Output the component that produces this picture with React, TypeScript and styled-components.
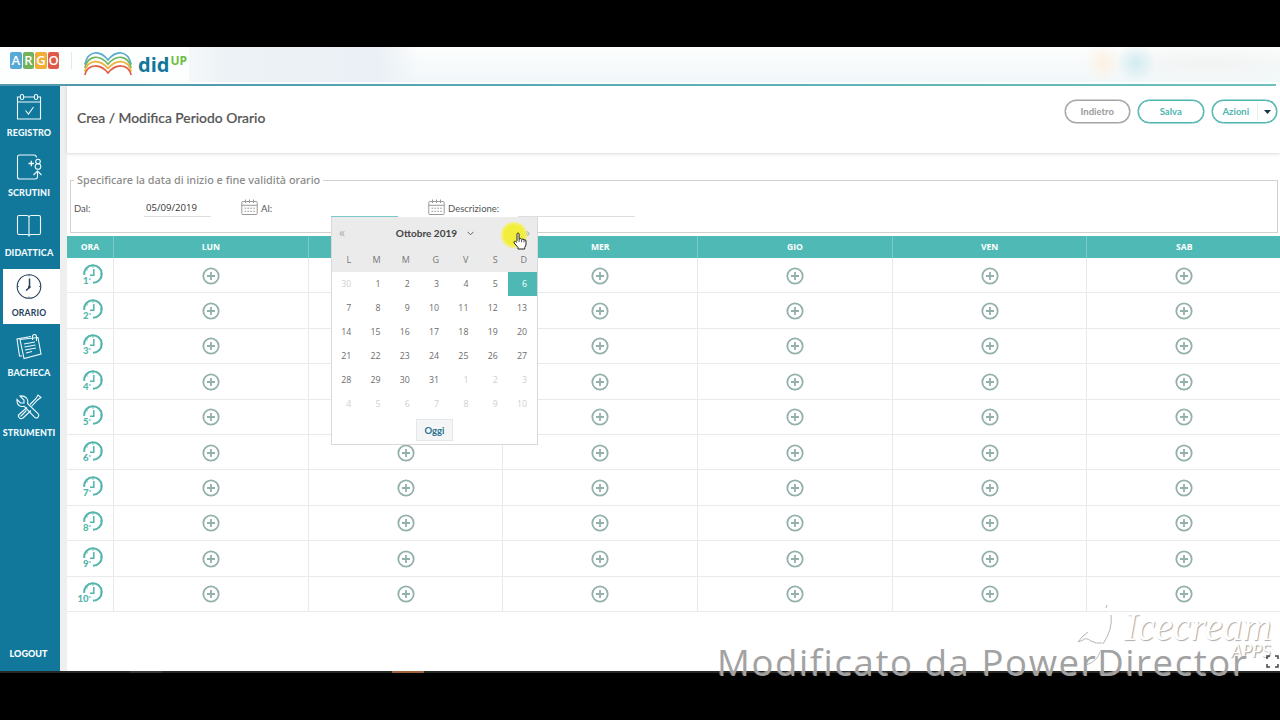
import React from "react";
import styled, { createGlobalStyle } from "styled-components";

const days = ["LUN", "MAR", "MER", "GIO", "VEN", "SAB"];
const hours = [1, 2, 3, 4, 5, 6, 7, 8, 9, 10];
const weekDays = ["L", "M", "M", "G", "V", "S", "D"];

// 30 settembre -> 10 novembre
const calendar = [
  30,
  ...Array.from({ length: 31 }, (_, i) => i + 1),
  ...Array.from({ length: 10 }, (_, i) => i + 1),
];

const IconRegistro: React.FC = () => (
  <Icon viewBox="0 0 26 28">
    <path d="M4 4H1.5v22h23V4H22M8 4h10M1.5 9h23" />
    <rect x="4.4" y="1.5" width="3.2" height="5" rx="1.5" />
    <rect x="18.4" y="1.5" width="3.2" height="5" rx="1.5" />
    <path d="M9.5 17.5l3 3.5 5-7" />
  </Icon>
);

const IconScrutini: React.FC = () => (
  <Icon viewBox="0 0 26 28">
    <path d="M20.500 4.500q-.3-2.500-2.500-2.500H3.500q-2 0-2 2v20q0 2 2 2H19q2.500 0 2.500-2.500V18" />
    <path d="M12.500 10.500h5.500M15.300 7.800v5.500" strokeWidth="1.300" />
    <circle cx="22" cy="8.500" r="2.300" />
    <circle cx="22" cy="13.500" r="2.800" />
    <path d="M17.500 22l4-4 4 4" />
  </Icon>
);

const IconDidattica: React.FC = () => (
  <Icon viewBox="0 0 26 28">
    <path d="M13 4q-.5-1.500-2-1.500H3q-1.500 0-1.500 1.500v16q0 1.500 1.500 1.500h8q2 0 2 2q0-2 2-2h8q1.500 0 1.500-1.500V4q0-1.500-1.500-1.500h-8q-1.500 0-2 1.500v19" />
  </Icon>
);

const IconOrario: React.FC = () => (
  <Icon viewBox="0 0 26 28">
    <circle cx="13" cy="13.500" r="11.800" />
    <path d="M13.500 5.500v9l-3.500 3" strokeWidth="1.500" />
    <circle cx="13.300" cy="14" r=".8" />
    <path d="M13 2v1.500M13 23.500V25M1.500 13.500H3M23 13.500h1.500" strokeWidth=".7" />
  </Icon>
);

const IconBacheca: React.FC = () => (
  <Icon viewBox="0 0 26 28">
    <path d="M6 23H3.500L1 6l14-2.500" />
    <path d="M4 6.500L22 4.500 25 21 8 25.500z" />
    <path d="M8 11l11-2M8.500 14l11-2M9 17l11-2M10 20l6-1.500" />
    <path d="M16.500 7V4q0-2.500 2-2.500t2 2.500v4" />
  </Icon>
);

const IconStrumenti: React.FC = () => (
  <Icon viewBox="0 0 26 28">
    <path d="M4 3l4 4v3H4.500L1 6.500q-.5 4 2 6 2 1.500 5 .7l10.500 11q1.500 1.500 3.500 0 1.500-2 0-3.500L11.500 10.500q1-3-1-5.500-2.500-2.500-6.500-2z" />
    <path d="M14 11.500l6-6 2-3.500 3 2.500-3.500 2.500-6 6.500M11 14.500L3.500 21q-2 1.500-.5 3.500t4 .5l8-7.500" />
    <path d="M4.500 23.500l6-6" />
  </Icon>
);

const menu = [
  { label: "REGISTRO", icon: <IconRegistro /> },
  { label: "SCRUTINI", icon: <IconScrutini /> },
  { label: "DIDATTICA", icon: <IconDidattica /> },
  { label: "ORARIO", icon: <IconOrario />, active: true },
  { label: "BACHECA", icon: <IconBacheca /> },
  { label: "STRUMENTI", icon: <IconStrumenti /> },
];

const DateIcon: React.FC = () => (
  <CalendarSvg viewBox="0 0 17 17">
    <rect x=".8" y="2.500" width="15.400" height="13" rx=".8" />
    <path d="M.8 6.300h15.400M4.500.5v3.500M8.500.5v3.500M12.500.5v3.500" />
    <path d="M3.500 9.200h10.500M3.500 12.300h10.500" strokeDasharray="1.700 1.200" />
  </CalendarSvg>
);

const arcs = [
  { color: "#5aa9cf", left: 12.500, ctrl: -2.100, center: 8 },
  { color: "#6eb65f", left: 16, ctrl: 2.400, center: 12.200 },
  { color: "#f0b33e", left: 19.500, ctrl: 6.900, center: 16.500 },
  { color: "#df5b43", left: 23, ctrl: 11.300, center: 21 },
];

const BookLogo: React.FC = () => (
  <BookSvg viewBox="0 0 48 25">
    {arcs.map(({ color, left, ctrl, center }) => (
      <path
        key={color}
        stroke={color}
        d={`M.8 ${left}C4 ${ctrl} 16 ${ctrl} 24 ${center}C32 ${ctrl} 44 ${ctrl} 47.2 ${left}`}
      />
    ))}
  </BookSvg>
);

const HourClock: React.FC<{ hour: number }> = ({ hour }) => (
  <HourIcon>
    <svg width="22" height="22" viewBox="0 0 22 22" fill="none" stroke="#52b5ac">
      <path d="M2.200 11.800A8.800 8.800 0 1 1 11 19.800" strokeWidth="2.100" />
      <path d="M11.800 6v6.300H8" strokeWidth="1.500" />
      <path d="M11 3v1.800M18 11h1.800M4.800 6.500l1 .6" />
    </svg>
    <HourLabel>
      {hour}
      <Degree>°</Degree>
    </HourLabel>
  </HourIcon>
);

const App: React.FC = () => {
  return (
    <Screen>
      <GlobalStyle />
      <Header>
        <Argo>
          <ArgoTile color="#57a9d6">A</ArgoTile>
          <ArgoTile color="#73b25c">R</ArgoTile>
          <ArgoTile color="#f0ad38">G</ArgoTile>
          <ArgoTile color="#df5a48">O</ArgoTile>
        </Argo>
        <BookLogo />
        <Brand>did</Brand>
        <BrandUp>UP</BrandUp>
        <HiddenBar />
      </Header>
      <HeaderLine />

      <Body>
        <Sidebar>
          {menu.map(({ label, icon, active }) => (
            <MenuItem key={label} $active={active}>
              {icon}
              <MenuLabel $active={active}>{label}</MenuLabel>
            </MenuItem>
          ))}
          <Logout>LOGOUT</Logout>
        </Sidebar>

        <Content>
          <TitleBar>
            <Title>Crea / Modifica Periodo Orario</Title>
            <Buttons>
              <PillButton $muted>Indietro</PillButton>
              <PillButton>Salva</PillButton>
              <PillButton $split>
                Azioni
                <Caret>
                  <svg width="7" height="4" viewBox="0 0 7 4">
                    <path d="M0 0h7L3.500 4z" fill="#1d3444" />
                  </svg>
                </Caret>
              </PillButton>
            </Buttons>
          </TitleBar>

          <Period>
            <Legend>Specificare la data di inizio e fine validità orario</Legend>
            <Fields>
              <FieldLabel $width={70}>Dal:</FieldLabel>
              <DateField $width={67}>05/09/2019</DateField>
              <DateIcon />
              <FieldLabel $width={70}>Al:</FieldLabel>
              <DateField $width={67} $focus>
                <Picker>
                  <PickerTop>
                    <Month>
                      <Arrow>«</Arrow>
                      <MonthName>
                        Ottobre 2019
                        <svg width="7" height="5" viewBox="0 0 7 5" fill="none" stroke="#666">
                          <path d="M.5.8l3 3 3-3" />
                        </svg>
                      </MonthName>
                      <Arrow>»</Arrow>
                    </Month>
                    <Week>
                      {weekDays.map((d, i) => (
                        <WeekDay key={i}>{d}</WeekDay>
                      ))}
                    </Week>
                  </PickerTop>
                  <Week>
                    {calendar.map((d, i) => (
                      <Day key={i} $out={i === 0 || i > 31} $selected={i === 6}>
                        {d}
                      </Day>
                    ))}
                  </Week>
                  <Today>Oggi</Today>
                </Picker>
              </DateField>
              <DateIcon />
              <FieldLabel $width={70}>Descrizione:</FieldLabel>
              <DateField $width={117} />
            </Fields>
          </Period>

          <Table>
            <HeadCell>ORA</HeadCell>
            {days.map((d) => (
              <HeadCell key={d}>{d}</HeadCell>
            ))}
            {hours.map((h) => (
              <React.Fragment key={h}>
                <Cell>
                  <HourClock hour={h} />
                </Cell>
                {days.map((d) => (
                  <Cell key={d}>
                    <AddSvg viewBox="0 0 18 18">
                      <circle cx="9" cy="9" r="7.700" />
                      <path d="M9 5v8M5 9h8" />
                    </AddSvg>
                  </Cell>
                ))}
              </React.Fragment>
            ))}
          </Table>
        </Content>
      </Body>

      <TaskStrip>
        <TaskMark $left={130} $color="#3a3a38" />
        <TaskMark $left={392} $color="#9a633a" />
      </TaskStrip>

      <ClickSpot />
      <Hand viewBox="0 0 14 18">
        <path
          d="M4 9V2.200Q4 1 5 1t1.100 1.200V7Q8.300 5.900 8.600 7.300 10.700 6.300 11 8q2-.8 2 1v3q0 2-1.300 3.500V17H5v-1.500L1.200 11Q.5 9.700 1.500 9.300T4 10.500"
          fill="#fff"
          stroke="#222"
        />
        <path d="M6.100 7v3M8.600 7.500v2.700M11 8.300v2" stroke="#222" strokeWidth=".8" />
      </Hand>

      <ConeSvg viewBox="0 0 40 74">
        <path d="M31 9l-1 3M35 19q2 14-8 29M12 36l-5 4-5 6 5-2q3-3 8 1 5 3 11 2M25 54q-4 12-15 15" />
      </ConeSvg>
      <Icecream>Icecream</Icecream>
      <Apps>APPS</Apps>
      <Watermark>Modificato da PowerDirector</Watermark>
      <Fullscreen viewBox="0 0 13 13">
        <path d="M1 4V1h3M9 1h3v3M12 9v3H9M4 12H1V9" />
      </Fullscreen>
    </Screen>
  );
};

const GlobalStyle = createGlobalStyle`
  * {
    box-sizing: border-box;
  }

  body {
    margin: 0;
    background: #000;
    overflow: hidden;
  }
`;

const Screen = styled.div`
  position: relative;
  width: 1280px;
  height: 720px;
  padding-top: 47px;
  overflow: hidden;
  background: #000;
  font-family: Lato, sans-serif;
`;

const Header = styled.header`
  display: flex;
  height: 37px;
  background: #fdfefe;
`;

const Argo = styled.div`
  display: flex;
  gap: 1px;
  width: 61px;
  height: 17px;
  margin-top: 5px;
  padding-left: 10px;
  border-right: 1px solid #e8e8e8;
  box-sizing: content-box;
`;

const ArgoTile = styled.span<{ color: string }>`
  flex: none;
  width: 11.600px;
  height: 17px;
  border-radius: 2px;
  background: ${({ color }) => color};
  color: #fff;
  font-family: "Open Sans", sans-serif;
  font-size: 13px;
  font-weight: 600;
  line-height: 17px;
  text-align: center;
`;

const BookSvg = styled.svg`
  width: 48px;
  height: 25px;
  margin: 5px 0 0 12px;
  fill: none;
  stroke-width: 1.700;
`;

const Brand = styled.span`
  margin: 5px 0 0 6px;
  color: #11779b;
  font-family: "Open Sans", sans-serif;
  font-size: 20px;
  font-weight: 700;
  line-height: 25px;
`;

const BrandUp = styled.span`
  width: 19px;
  margin: 6px 0 0 1px;
  color: #6ebe45;
  font-family: "Open Sans", sans-serif;
  font-size: 12px;
  font-weight: 700;
  line-height: 16px;
`;

const HiddenBar = styled.div`
  flex: 1;
  height: 35px;
  background:
    radial-gradient(ellipse 18px 20px at 914px 16px, #fdf1e2, transparent),
    radial-gradient(ellipse 20px 20px at 947px 16px, #d3ecf0, transparent),
    radial-gradient(ellipse 120px 22px at 1020px 16px, #f2f3f3, transparent),
    linear-gradient(90deg, #f4f8fa, #edf2f6 40px, #eaf0f5 190px, transparent 230px),
    linear-gradient(#fdfdfd, #f1f8fa);
`;

const HeaderLine = styled.div`
  height: 2px;
  border-right: 4px solid #fff;
  background: linear-gradient(90deg, #5497ad, #5bb1b8 50%, #70c4c0);
`;

const Body = styled.div`
  display: flex;
  height: 585px;
  background: #fff;
`;

const Sidebar = styled.nav`
  display: flex;
  flex-direction: column;
  width: 60px;
  padding-top: 3px;
  background: #11789c;
`;

const MenuItem = styled.div<{ $active?: boolean }>`
  display: flex;
  flex-direction: column;
  align-items: center;
  height: 55px;
  margin: 0 0 5px 3px;
  padding: 4px 5px 0 0;
  background: ${({ $active }) => ($active ? "#fff" : "transparent")};
  color: ${({ $active }) => ($active ? "#26415a" : "#f0fafd")};
`;

const Icon = styled.svg`
  width: 26px;
  height: 28px;
  fill: none;
  stroke: currentColor;
  stroke-width: 1.100;
`;

const MenuLabel = styled.span<{ $active?: boolean }>`
  margin-top: 6px;
  font-size: ${({ $active }) => ($active ? 8.600 : 9)}px;
  font-weight: ${({ $active }) => ($active ? 700 : 900)};
  line-height: 12px;
  letter-spacing: ${({ $active }) => ($active ? 0.200 : 0.100)}px;
  white-space: nowrap;
`;

const Logout = styled.div`
  margin-top: auto;
  padding: 0 3px 11px 0;
  color: #fff;
  font-size: 9px;
  font-weight: 900;
  line-height: 12px;
  text-align: center;
`;

const Content = styled.main`
  flex: 1;
  min-width: 0;
  border-left: 7px solid #efeff0;
`;

const TitleBar = styled.div`
  display: flex;
  justify-content: space-between;
  height: 67px;
  padding: 14px 3px 0 10px;
  box-shadow: 0 1px 3px rgba(0, 0, 0, 0.15);
`;

const Title = styled.h1`
  margin: 9px 0 0;
  color: #555;
  font-size: 13.850px;
  font-weight: 500;
  line-height: 18px;
  -webkit-text-stroke: 0.2px #555;
`;

const Buttons = styled.div`
  display: flex;
  gap: 8px;
`;

const PillButton = styled.button<{ $muted?: boolean; $split?: boolean }>`
  display: flex;
  align-items: center;
  justify-content: center;
  width: 65.500px;
  height: 23px;
  padding: ${({ $split }) => ($split ? "0 0 0 10px" : "0")};
  border: 1px solid ${({ $muted }) => ($muted ? "#a3a3a3" : "#4fb5b0")};
  border-radius: 12px;
  background: #fff;
  box-shadow: 0 0 0 0.500px ${({ $muted }) => ($muted ? "#a3a3a3" : "#4fb5b0")};
  color: ${({ $muted }) => ($muted ? "#9b9b9b" : "#4fb5b0")};
  font-family: Lato, sans-serif;
  font-size: 9.500px;
  font-weight: 700;
`;

const Caret = styled.span`
  display: flex;
  align-items: center;
  justify-content: center;
  width: 19px;
  height: 19px;
  margin-left: 8px;
  border-left: 1px solid #e6eeee;
`;

const Period = styled.fieldset`
  height: 60px;
  margin: 20px 2px 3px 3px;
  padding: 0;
  border: 1px solid #d0d0ce;
`;

const Legend = styled.legend`
  margin-left: 3px;
  padding: 0 3px 2px;
  color: #8b8b8b;
  font-family: "Noto Sans", sans-serif;
  font-size: 10.850px;
  font-weight: 500;
  line-height: 13px;
`;

const Fields = styled.div`
  display: flex;
  padding: 10px 0 0 3px;
`;

const FieldLabel = styled.label<{ $width: number }>`
  width: ${({ $width }) => $width}px;
  padding-top: 4px;
  color: #555;
  font-size: 9.500px;
  line-height: 14px;
`;

const DateField = styled.div<{ $width: number; $focus?: boolean }>`
  position: relative;
  width: ${({ $width }) => $width}px;
  height: 19px;
  padding: 3px 0 0 2px;
  border-bottom: 1px solid ${({ $focus }) => ($focus ? "#7cc8c8" : "#dedede")};
  color: #333;
  font-family: "Open Sans", sans-serif;
  font-size: 9.600px;
  line-height: 14px;
`;

const CalendarSvg = styled.svg`
  width: 17px;
  height: 17px;
  margin: 1px 3px 0 30px;
  fill: none;
  stroke: #9a9a9a;
`;

const Picker = styled.div`
  position: absolute;
  z-index: 2;
  top: 19px;
  left: 0;
  width: 207px;
  height: 228px;
  border: 1px solid #d9d9d9;
  border-top: 0;
  background: #fff;
`;

const PickerTop = styled.div`
  height: 55px;
  padding-top: 1px;
  background: #ebebeb;
`;

const Month = styled.div`
  display: flex;
  align-items: center;
  justify-content: space-between;
  height: 30px;
  padding: 0 7px;
`;

const MonthName = styled.span`
  display: flex;
  align-items: center;
  gap: 10px;
  padding-left: 1px;
  color: #444;
  font-family: Lato, sans-serif;
  font-size: 10.050px;
  font-weight: 700;
`;

const Arrow = styled.span`
  color: #aaa;
  font-size: 12px;
`;

const Week = styled.div`
  display: grid;
  grid-template-columns: repeat(7, 1fr);
  grid-auto-rows: 24px;
`;

const WeekDay = styled.span`
  padding-right: 10px;
  color: #777;
  font-size: 9px;
  line-height: 24px;
  text-align: right;
`;

const Day = styled.span<{ $out?: boolean; $selected?: boolean }>`
  padding-right: 10px;
  background: ${({ $selected }) => ($selected ? "#4db8b4" : "transparent")};
  color: ${({ $out, $selected }) => ($selected ? "#fff" : $out ? "#cfcfcf" : "#6c6c6c")};
  font-size: 8.800px;
  line-height: 24px;
  text-align: right;
`;

const Today = styled.button`
  display: block;
  width: 37px;
  height: 22px;
  margin: 3px auto 0;
  padding: 0;
  border: 1px solid #e7e7e9;
  background: #f4f5f6;
  color: #2b728f;
  font-family: Lato, sans-serif;
  font-size: 9.500px;
  font-weight: 700;
`;

const Table = styled.div`
  display: grid;
  grid-template-columns: 47px repeat(6, 194.700px);
  grid-template-rows: 22px;
  grid-auto-rows: 35.400px;
`;

const HeadCell = styled.div`
  border-right: 1px solid #79cbc7;
  background: #4fb9b5;
  color: #fff;
  font-family: "Open Sans", sans-serif;
  font-size: 8.600px;
  font-weight: 700;
  line-height: 22px;
  text-align: center;
`;

const Cell = styled.div`
  display: flex;
  align-items: center;
  justify-content: center;
  border-right: 1px solid #e9ebeb;
  border-bottom: 1px solid #e9ebeb;
`;

const AddSvg = styled.svg`
  width: 18px;
  height: 18px;
  margin-top: 1px;
  fill: none;
  stroke: #93b1ac;
  stroke-width: 1.800;
`;

const HourIcon = styled.div`
  position: relative;
  width: 22px;
  height: 22px;
  margin: 0 0 3px 5px;
`;

const HourLabel = styled.span`
  display: flex;
  position: absolute;
  right: 12.500px;
  bottom: -1px;
  color: #52b5ac;
  font-size: 9.500px;
  font-weight: 900;
  line-height: 10px;
`;

const Degree = styled.span`
  font-size: 6px;
  line-height: 8px;
`;

const TaskStrip = styled.div`
  display: flex;
  position: relative;
  height: 2px;
  background: #272725;
`;

const TaskMark = styled.span<{ $left: number; $color: string }>`
  position: absolute;
  left: ${({ $left }) => $left}px;
  width: 32px;
  height: 2px;
  background: ${({ $color }) => $color};
`;

const ClickSpot = styled.div`
  position: absolute;
  z-index: 3;
  left: 500px;
  top: 221px;
  width: 28px;
  height: 28px;
  border-radius: 50%;
  background: radial-gradient(closest-side, #f3ed3c 70%, rgba(246, 241, 90, 0.8) 85%, rgba(245, 240, 120, 0));
`;

const Hand = styled.svg`
  position: absolute;
  z-index: 4;
  left: 513px;
  top: 232px;
  width: 14px;
  height: 18px;
  fill: none;
`;

const ConeSvg = styled.svg`
  position: absolute;
  left: 1076px;
  top: 596px;
  width: 40px;
  height: 74px;
  fill: none;
  stroke: #b5b5b5;
  stroke-width: 1;
`;

const Icecream = styled.span`
  position: absolute;
  left: 1124px;
  top: 605px;
  color: #fff;
  font-family: "Liberation Serif", serif;
  font-size: 40px;
  font-style: italic;
  line-height: 44px;
  text-shadow: 1px 1px 1px #aaa;
`;

const Apps = styled.span`
  position: absolute;
  left: 1231px;
  top: 641px;
  color: #fff;
  font-size: 17.500px;
  font-style: italic;
  line-height: 20px;
  text-shadow: 1px 1px 1px #999;
`;

const Watermark = styled.span`
  position: absolute;
  left: 717px;
  top: 640px;
  color: #a2a2a2;
  font-family: "Open Sans", sans-serif;
  font-size: 36.500px;
  letter-spacing: 1.600px;
  line-height: 44px;
  white-space: nowrap;
  text-shadow: -1px -1px 1px rgba(255, 255, 255, 0.5);
`;

const Fullscreen = styled.svg`
  position: absolute;
  left: 1266px;
  top: 655px;
  width: 13px;
  height: 13px;
  fill: none;
  stroke: #444;
  stroke-width: 1.500;
`;

export default App;
